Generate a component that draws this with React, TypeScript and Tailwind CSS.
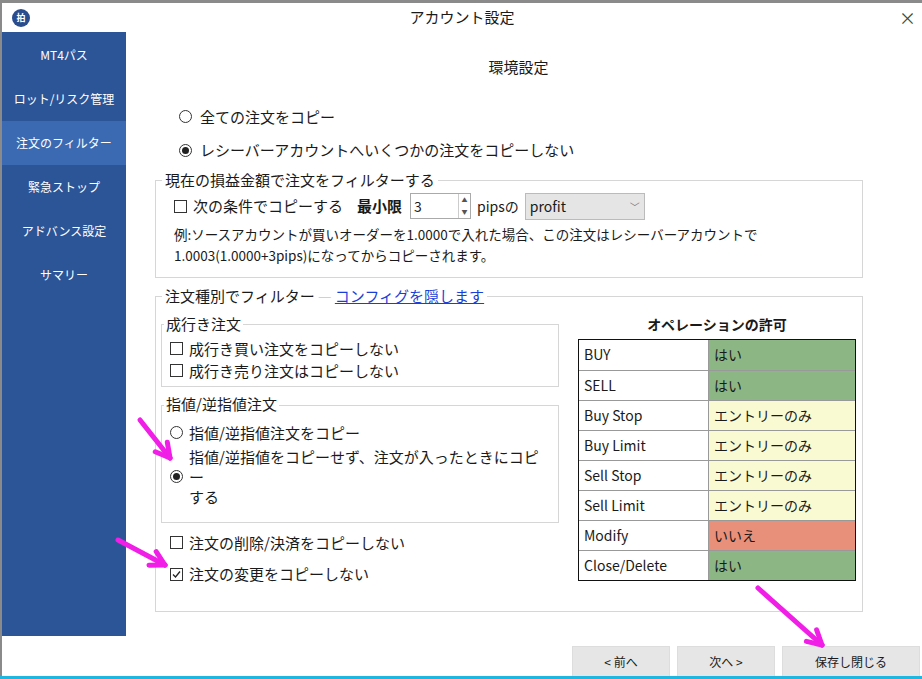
import React from "react";

const font = { fontFamily: '"Noto Sans CJK JP", "Noto Sans", sans-serif' };

function Radio({ on }: { on?: boolean }) {
  return (
    <span className="inline-flex h-[13px] w-[13px] shrink-0 items-center justify-center rounded-full border border-[#333] bg-white">
      {on && <span className="h-[7px] w-[7px] rounded-full bg-[#222]" />}
    </span>
  );
}

function Check({ on }: { on?: boolean }) {
  return (
    <span className="inline-flex h-[13px] w-[13px] shrink-0 items-center justify-center border border-[#333] bg-white">
      {on && (
        <svg width="11" height="11" viewBox="0 0 11 11">
          <path d="M2 5.5 L4.5 8 L9 2.5" fill="none" stroke="#222" strokeWidth="1.3" />
        </svg>
      )}
    </span>
  );
}

const rows: [string, string, string][] = [
  ["BUY", "はい", "bg-[#8cb785]"],
  ["SELL", "はい", "bg-[#8cb785]"],
  ["Buy Stop", "エントリーのみ", "bg-[#fafad2]"],
  ["Buy Limit", "エントリーのみ", "bg-[#fafad2]"],
  ["Sell Stop", "エントリーのみ", "bg-[#fafad2]"],
  ["Sell Limit", "エントリーのみ", "bg-[#fafad2]"],
  ["Modify", "いいえ", "bg-[#e8907a]"],
  ["Close/Delete", "はい", "bg-[#8cb785]"],
];

const nav = ["MT4パス", "ロット/リスク管理", "注文のフィルター", "緊急ストップ", "アドバンス設定", "サマリー"];

function Arrow({ x1, y1, x2, y2 }: { x1: number; y1: number; x2: number; y2: number }) {
  const a = Math.atan2(y2 - y1, x2 - x1);
  const l = 16;
  const p1 = [x2 - l * Math.cos(a - 0.5), y2 - l * Math.sin(a - 0.5)];
  const p2 = [x2 - l * Math.cos(a + 0.5), y2 - l * Math.sin(a + 0.5)];
  return (
    <g stroke="#f01ee6" strokeWidth="5" strokeLinecap="round" fill="none">
      <line x1={x1} y1={y1} x2={x2} y2={y2} />
      <line x1={x2} y1={y2} x2={p1[0]} y2={p1[1]} />
      <line x1={x2} y1={y2} x2={p2[0]} y2={p2[1]} />
    </g>
  );
}

export default function App() {
  return (
    <div className="relative h-[679px] w-[922px] overflow-hidden bg-white text-[#1a1a1a]" style={font}>
      <div className="flex h-full flex-col border-t-[3px] border-l-2 border-[#8a8a8a]">
        {/* title bar */}
        <div className="relative flex h-[29px] items-center justify-center">
          <span className="absolute left-[10px] top-[6px] flex h-[18px] w-[18px] items-center justify-center rounded-full bg-[#2a4d8f] text-[9px] font-bold text-white">拍</span>
          <span className="text-[15px]">アカウント設定</span>
          <span className="absolute right-[6px] top-[2px] text-[17px] text-[#444]">×</span>
        </div>
        <div className="flex flex-1">
          {/* sidebar */}
          <div className="flex h-[604px] w-[124px] flex-col bg-[#2b5597] pt-[1px]">
            {nav.map((n, i) => (
              <div key={n} className={`flex h-[44px] items-center justify-center text-[12px] text-white ${i === 2 ? "bg-[#3b6ab3]" : ""}`}>
                {n}
              </div>
            ))}
          </div>
          {/* content */}
          <div className="relative flex-1 pl-[29px]">
            <div className="pt-[24px] text-center text-[15px] pr-[40px]">環境設定</div>
            <div className="mt-[27px] ml-[24px] flex items-center gap-[8px] text-[15px]"><Radio />全ての注文をコピー</div>
            <div className="mt-[11px] ml-[24px] flex items-center gap-[8px] text-[15px]"><Radio on />レシーバーアカウントへいくつかの注文をコピーしない</div>

            {/* group 1 */}
            <div className="relative mt-[18px] h-[98px] w-[708px] border border-[#d6d6d6] px-[18px] pt-[12px]">
              <span className="absolute -top-[12px] left-[6px] bg-white px-[3px] text-[15px]">現在の損益金額で注文をフィルターする</span>
              <div className="flex items-center gap-[6px] text-[15px]">
                <Check />次の条件でコピーする
                <b className="ml-[8px] mr-[2px] font-bold">最小限</b>
                <div className="flex h-[26px] w-[61px] items-center justify-between border border-[#aaa] pl-[3px] text-[14px]">
                  3
                  <div className="flex h-full w-[12px] flex-col border-l border-[#ccc] text-[6px] leading-[12px] text-[#555]">
                    <span className="text-center">▲</span><span className="text-center">▼</span>
                  </div>
                </div>
                <span className="text-[14px]">pipsの</span>
                <div className="flex h-[27px] w-[120px] items-center justify-between border border-[#bbb] bg-[#e5e5e5] px-[4px] text-[14px]">
                  profit<span className="text-[10px] text-[#777]">﹀</span>
                </div>
              </div>
              <div className="mt-[4px] text-[13.5px] leading-[21px]">例:ソースアカウントが買いオーダーを1.0000で入れた場合、この注文はレシーバーアカウントで<br />1.0003(1.0000+3pips)になってからコピーされます。</div>
            </div>

            {/* group 2 */}
            <div className="relative mt-[18px] flex h-[316px] w-[708px] border border-[#d6d6d6] pl-[5px] pt-[27px]">
              <span className="absolute -top-[12px] left-[6px] bg-white px-[3px] text-[15px]">注文種別でフィルター <span className="text-[#d0d0d0]">—</span> <span className="text-[#1a3fd8] underline">コンフィグを隠します</span></span>
              <div className="w-[398px]">
                <div className="relative h-[63px] border border-[#d6d6d6] px-[8px] pt-[13px] text-[15px] leading-[22px]">
                  <span className="absolute -top-[12px] left-[2px] bg-white px-[2px]">成行き注文</span>
                  <div className="flex items-center gap-[6px]"><Check />成行き買い注文をコピーしない</div>
                  <div className="flex items-center gap-[6px]"><Check />成行き売り注文はコピーしない</div>
                </div>
                <div className="relative mt-[18px] h-[118px] border border-[#d6d6d6] px-[8px] pt-[17px] text-[15px] leading-[20px]">
                  <span className="absolute -top-[12px] left-[2px] bg-white px-[2px]">指値/逆指値注文</span>
                  <div className="flex items-center gap-[6px]"><Radio />指値/逆指値注文をコピー</div>
                  <div className="mt-[4px] flex items-center gap-[6px]"><Radio on /><span>指値/逆指値をコピーせず、注文が入ったときにコピー<br />する</span></div>
                </div>
                <div className="mt-[9px] ml-[9px] flex items-center gap-[6px] text-[15px]"><Check />注文の削除/決済をコピーしない</div>
                <div className="mt-[9px] ml-[9px] flex items-center gap-[6px] text-[15px]"><Check on />注文の変更をコピーしない</div>
              </div>
              <div className="ml-[19px] -mt-[10px] w-[278px]">
                <div className="text-center text-[14px] font-bold">オペレーションの許可</div>
                <div className="mt-[4px] border border-[#111]">
                  {rows.map(([k, v, c], i) => (
                    <div key={k} className={`flex h-[30px] ${i ? "border-t border-[#999]" : ""}`}>
                      <div className="flex w-[130px] items-center border-r border-[#999] pl-[5px] text-[14px]">{k}</div>
                      <div className={`flex flex-1 items-center pl-[5px] text-[14px] ${c}`}>{v}</div>
                    </div>
                  ))}
                </div>
              </div>
            </div>

            {/* buttons */}
            <div className="absolute right-[2px] top-[614px] flex gap-[7px] text-[12px]">
              <div className="flex h-[32px] w-[98px] items-center justify-center border border-[#ddd] bg-[#e6e6e6]">&lt; 前へ</div>
              <div className="flex h-[32px] w-[98px] items-center justify-center border border-[#ddd] bg-[#e6e6e6]">次へ &gt;</div>
              <div className="flex h-[32px] w-[138px] items-center justify-center border border-[#ddd] bg-[#e6e6e6]">保存し閉じる</div>
            </div>
          </div>
        </div>
      </div>
      <div className="absolute bottom-0 left-0 h-[3px] w-full bg-[#1fb6e0]" />
      <svg className="pointer-events-none absolute left-0 top-0" width="922" height="679">
        <Arrow x1={140} y1={420} x2={170} y2={458} />
        <Arrow x1={118} y1={540} x2={165} y2={565} />
        <Arrow x1={758} y1={588} x2={822} y2={645} />
      </svg>
    </div>
  );
}
